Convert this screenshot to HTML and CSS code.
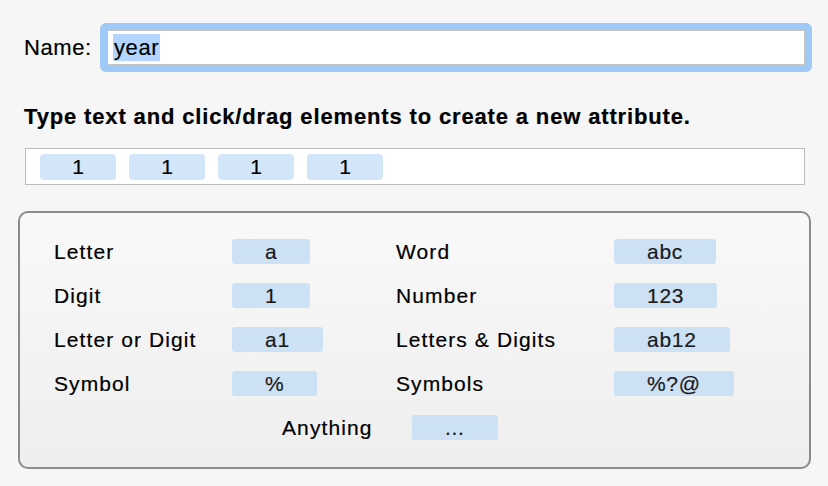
FILE: index.html
```html
<!DOCTYPE html>
<html>
<head>
<meta charset="utf-8">
<link rel="stylesheet" href="styles.css">
</head>
<body>
<div class="name-row">
  <label class="name-label">Name:</label>
  <div class="field-ring">
    <div class="field"><span class="sel">year</span></div>
  </div>
</div>
<p class="hint">Type text and click/drag elements to create a new attribute.</p>
<div class="tokens">
  <span class="token">1</span>
  <span class="token">1</span>
  <span class="token">1</span>
  <span class="token">1</span>
</div>
<div class="panel">
  <div class="grid">
    <span class="lbl">Letter</span><span class="chip">a</span>
    <span class="lbl">Word</span><span class="chip">abc</span>
    <span class="lbl">Digit</span><span class="chip">1</span>
    <span class="lbl">Number</span><span class="chip">123</span>
    <span class="lbl">Letter or Digit</span><span class="chip">a1</span>
    <span class="lbl">Letters &amp; Digits</span><span class="chip">ab12</span>
    <span class="lbl">Symbol</span><span class="chip">%</span>
    <span class="lbl">Symbols</span><span class="chip">%?@</span>
  </div>
  <div class="any-row">
    <span class="lbl any-lbl">Anything</span><span class="chip">...</span>
  </div>
</div>
</body>
</html>
```
FILE: styles.css
```css
html, body {
  margin: 0;
  padding: 0;
}
body {
  background: #f6f6f6;
  font-family: "Liberation Sans", Arial, sans-serif;
  color: #000;
  width: 828px;
  height: 486px;
  overflow: hidden;
  -webkit-text-stroke: 0.2px currentColor;
}
.name-row {
  display: flex;
  align-items: center;
  padding: 23px 16px 0 24px;
}
.name-label {
  font-size: 22px;
  letter-spacing: 0.6px;
  width: 76px;
}
.field-ring {
  flex: 1;
  background: #9fc9f6;
  border-radius: 6px;
  padding: 7px;
}
.field {
  background: #fff;
  border: 1px solid #c6c6c6;
  height: 33px;
  display: flex;
  align-items: center;
  padding-left: 5px;
}
.sel {
  background: #b4d6fe;
  font-size: 22px;
  letter-spacing: 0.6px;
  line-height: 27px;
  padding: 0 1px;
}
.hint {
  margin: 0;
  padding: 32px 0 0 24px;
  font-weight: bold;
  font-size: 22px;
  letter-spacing: 0.85px;
  line-height: 26px;
}
.tokens {
  margin: 18px 0 0 25px;
  width: 764px;
  height: 26px;
  background: #fff;
  border: 1px solid #bcbcbc;
  padding: 5px 0 4px 14px;
  display: flex;
  gap: 13px;
  box-sizing: content-box;
}
.token {
  width: 76px;
  height: 26px;
  background: #d3e6f9;
  border-radius: 4px;
  display: flex;
  align-items: center;
  justify-content: center;
  font-size: 21px;
}
.panel {
  margin: 26px 0 0 18px;
  width: 793px;
  height: 258px;
  border: 2px solid #8c8c8c;
  border-radius: 10px;
  background: linear-gradient(#f9f9f9, #eeeeee);
  padding: 26px 0 0 34px;
  box-sizing: border-box;
}
.grid {
  display: grid;
  grid-template-columns: 178px 164px 218px auto;
  grid-auto-rows: 25px;
  row-gap: 19px;
  align-items: center;
}
.lbl {
  font-size: 21px;
  letter-spacing: 1.1px;
}
.chip {
  justify-self: start;
  height: 25px;
  padding: 0 33px;
  background: #cde1f5;
  border-radius: 3px;
  display: inline-flex;
  align-items: center;
  font-size: 21px;
  letter-spacing: 0.7px;
  color: #1a1a1a;
}
.any-row {
  display: flex;
  align-items: center;
  margin-top: 19px;
  padding-left: 228px;
  height: 25px;
}
.any-lbl {
  width: 130px;
}
```
